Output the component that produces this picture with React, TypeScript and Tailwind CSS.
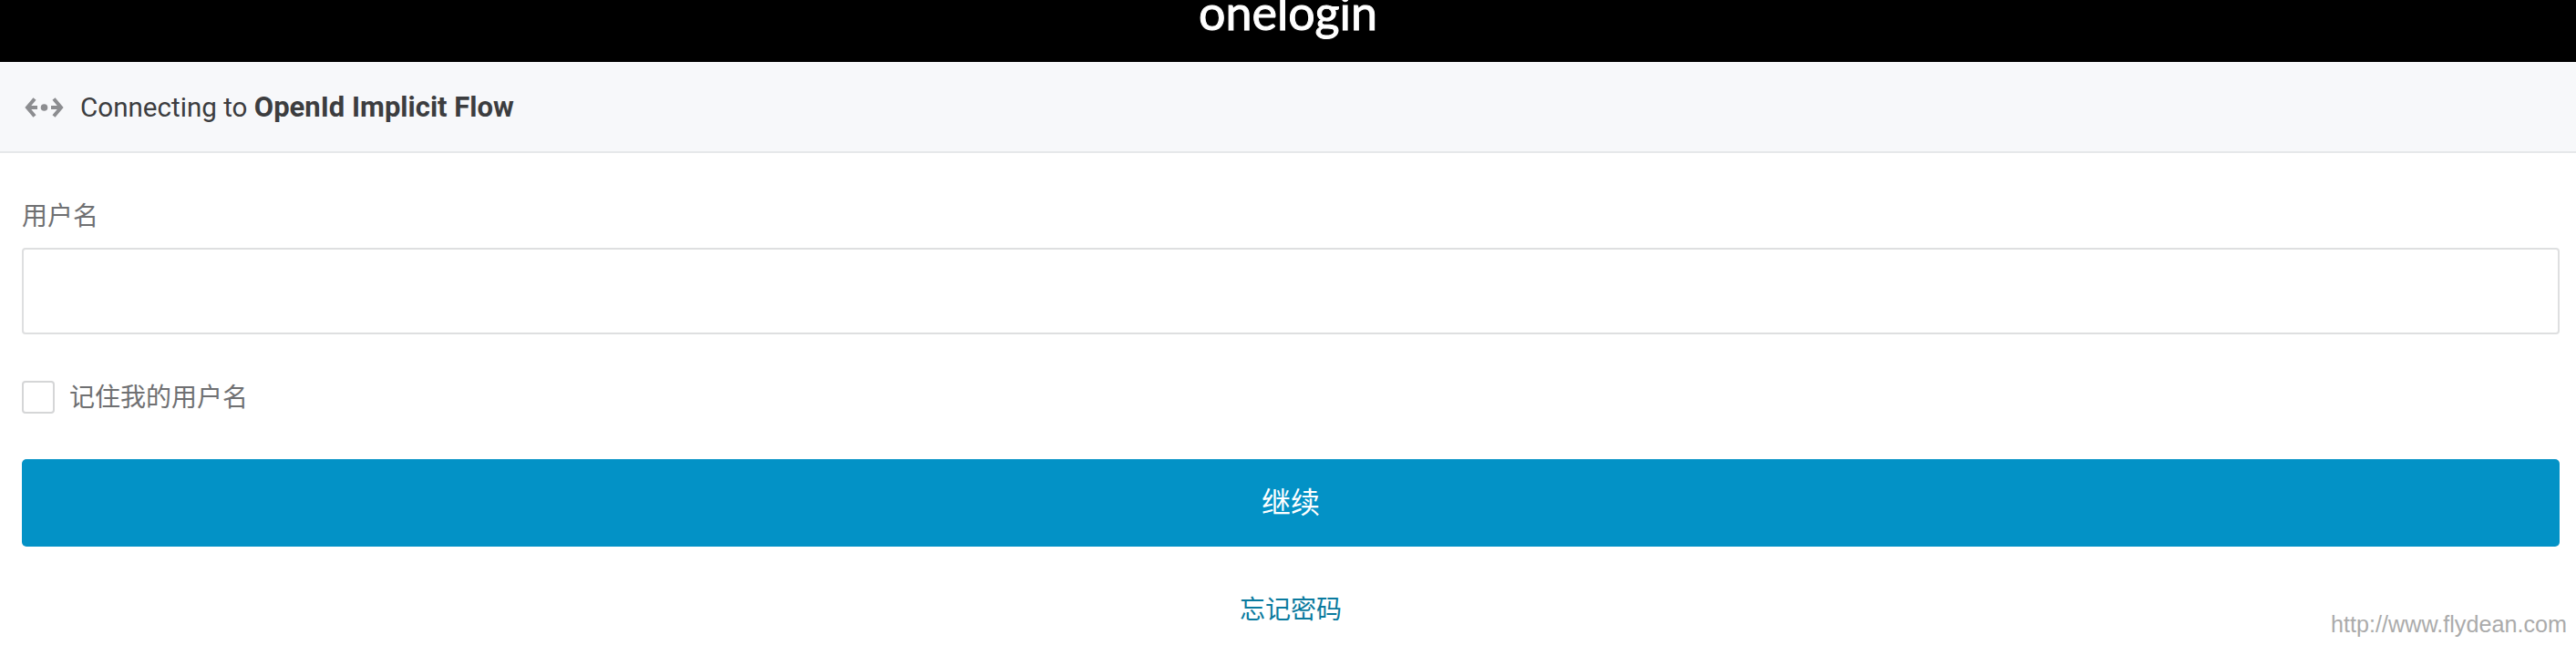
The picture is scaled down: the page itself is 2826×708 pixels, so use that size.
export default function App() {
  const cjk = "font-['Roboto','Noto_Sans_CJK_SC',sans-serif]";
  return (
    <div className={`relative h-[708px] w-full overflow-hidden bg-white ${cjk}`}>
      <header className="flex h-[68px] justify-center overflow-hidden bg-black">
        <span className="mt-[-19px] font-['Lato',sans-serif] text-[52px] leading-[64px] font-normal text-white [-webkit-text-stroke:1px_white]">onelogin</span>
      </header>
      <div className="flex h-[100px] items-center gap-[18px] border-b-2 border-[#e6e8ea] bg-[#f7f8fa] pt-[2px] pl-[27px]">
        <svg width="43" height="24" viewBox="0 0 43 24" fill="none" className="shrink-0">
          <path d="M11 2.5 L3 12 L11 21.5 M3 12 H14" stroke="#8c8d90" strokeWidth="4" />
          <circle cx="21.5" cy="12" r="3.8" fill="#8c8d90" />
          <path d="M32 2.5 L40 12 L32 21.5 M29 12 H40" stroke="#8c8d90" strokeWidth="4" />
        </svg>
        <p className="text-[29.6px] leading-none text-[#3c3d3f]">
          Connecting to <strong className="text-[31px] font-bold">OpenId Implicit Flow</strong>
        </p>
      </div>
      <form className="flex flex-col pr-[18px] pl-[24px]">
        <label className="mt-[51px] text-[28px] leading-[38px] text-[#6f7072]">用户名</label>
        <input type="text" className="mt-[15px] h-[95px] w-full rounded-[4px] border-2 border-[#dedfe0] bg-white" />
        <label className="mt-[50px] flex h-[38px] items-center gap-[16px] text-[28px] leading-[38px] text-[#6f7072]">
          <span className="h-[36px] w-[36px] rounded-[4px] border-2 border-[#d5d6d7] bg-white" />
          <span className="pt-[2px]">记住我的用户名</span>
        </label>
        <button type="button" className="mt-[49px] h-[96px] w-full rounded-[5px] bg-[#0392c6] text-[32px] text-white">继续</button>
        <a className="mt-[51px] self-center text-[28px] leading-[38px] text-[#0a7a9e]">忘记密码</a>
      </form>
      <span className="absolute top-[670px] right-[10px] font-['Liberation_Sans',sans-serif] text-[25.2px] leading-[30px] text-[#ababab]">http://www.flydean.com</span>
    </div>
  );
}
